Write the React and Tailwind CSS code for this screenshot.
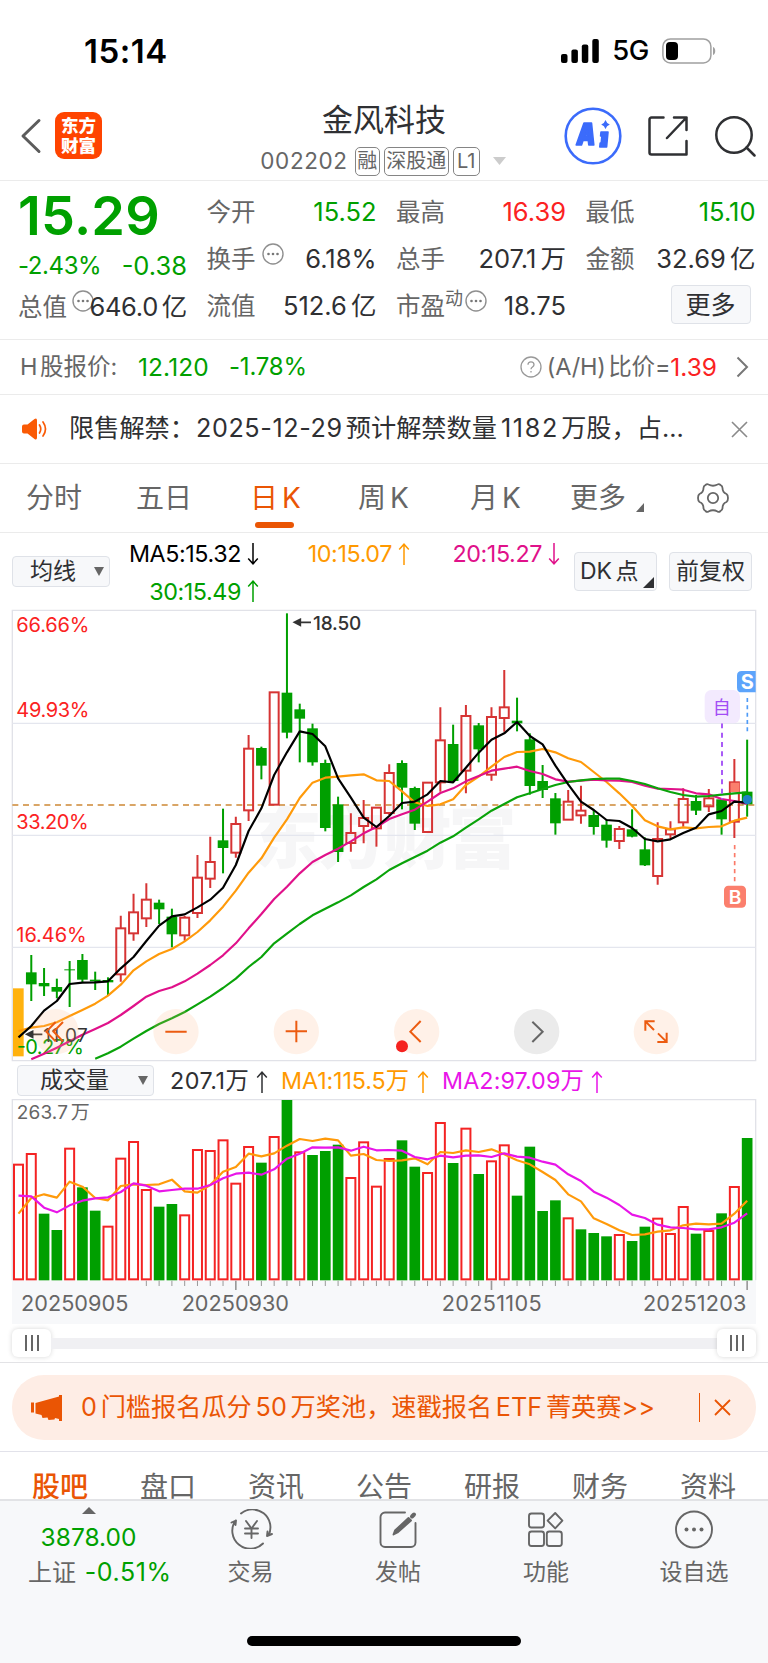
// Stock detail page: quote header, daily K-line chart, volume chart and bottom bar
import React from 'react';

// Chart units are a third of a pixel; one candle every 38.35 units
const STEP = 38.35;
const FIRST = 55.5;
const xAt = (i) => FIRST + i * STEP;

// [direction, high, body top, body bottom, low]
const candles = [
  ['o', 1165, 1165, 1366, 1370],
  ['g', 1065, 1117, 1153, 1203],
  ['g', 1104, 1149, 1159, 1188],
  ['g', 1136, 1161, 1175, 1195],
  ['g', 1083, 1108, 1111, 1221],
  ['g', 1062, 1080, 1139, 1146],
  ['g', 1115, 1139, 1144, 1170],
  ['g', 1132, 1140, 1147, 1187],
  ['r', 947, 984, 1124, 1145],
  ['r', 881, 936, 1001, 1022],
  ['r', 850, 898, 956, 981],
  ['g', 899, 908, 928, 972],
  ['g', 926, 950, 1003, 1042],
  ['r', 948, 952, 1007, 1022],
  ['r', 765, 832, 940, 954],
  ['r', 710, 785, 837, 864],
  ['g', 626, 721, 744, 820],
  ['r', 650, 671, 759, 773],
  ['r', 405, 445, 632, 663],
  ['g', 440, 444, 497, 538],
  ['r', 276, 276, 615, 615],
  ['g', 40, 278, 398, 415],
  ['g', 311, 328, 356, 487],
  ['g', 371, 385, 487, 497],
  ['g', 479, 489, 684, 694],
  ['g', 590, 613, 756, 786],
  ['r', 640, 698, 730, 755],
  ['r', 600, 653, 679, 730],
  ['r', 622, 622, 686, 740],
  ['r', 493, 518, 640, 645],
  ['g', 481, 489, 563, 628],
  ['g', 560, 564, 671, 690],
  ['r', 547, 547, 697, 697],
  ['r', 322, 420, 548, 575],
  ['g', 374, 432, 543, 545],
  ['r', 315, 347, 513, 580],
  ['g', 369, 376, 448, 487],
  ['r', 322, 350, 525, 542],
  ['r', 210, 321, 355, 395],
  ['g', 293, 362, 370, 394],
  ['g', 400, 418, 558, 584],
  ['g', 495, 543, 570, 594],
  ['g', 579, 595, 670, 704],
  ['r', 570, 604, 660, 660],
  ['r', 557, 631, 647, 671],
  ['g', 629, 645, 681, 704],
  ['g', 658, 674, 722, 743],
  ['r', 678, 686, 724, 747],
  ['g', 628, 688, 710, 712],
  ['g', 712, 748, 796, 798],
  ['r', 667, 716, 829, 854],
  ['r', 664, 687, 704, 718],
  ['r', 565, 596, 668, 680],
  ['g', 585, 603, 632, 645],
  ['r', 567, 594, 620, 636],
  ['g', 598, 598, 658, 704],
  ['r', 477, 546, 666, 714],
  ['g', 419, 575, 613, 650],
];

const ma5 = [1312, 1278, 1232, 1203, 1152, 1148, 1147, 1144, 1105, 1071, 1023, 977, 949, 943, 922, 899, 863, 795, 693, 625, 525, 457, 394, 402, 439, 535, 593, 653, 681, 648, 609, 605, 583, 543, 547, 503, 458, 419, 400, 366, 408, 433, 497, 553, 605, 630, 660, 663, 684, 717, 724, 718, 699, 683, 643, 633, 605, 608];
const ma10 = [1293, 1283, 1278, 1267, 1248, 1230, 1211, 1187, 1154, 1111, 1084, 1062, 1047, 1024, 996, 961, 920, 872, 818, 775, 713, 658, 594, 548, 533, 530, 526, 523, 541, 543, 574, 607, 618, 613, 598, 555, 530, 500, 471, 456, 455, 447, 457, 475, 486, 516, 546, 580, 617, 661, 679, 688, 682, 685, 681, 679, 662, 653];
const ma20 = [null, 1378, 1361, 1343, 1324, 1304, 1287, 1269, 1245, 1218, 1190, 1173, 1162, 1144, 1121, 1095, 1066, 1030, 985, 942, 897, 860, 820, 786, 765, 746, 724, 700, 681, 657, 643, 629, 605, 579, 565, 544, 528, 512, 506, 500, 513, 522, 538, 545, 542, 539, 541, 542, 546, 557, 566, 567, 569, 580, 583, 597, 603, 612];
const ma30 = [null, null, null, null, null, null, 1376, 1360, 1340, 1316, 1293, 1272, 1255, 1236, 1213, 1190, 1164, 1136, 1101, 1071, 1030, 1001, 972, 946, 926, 907, 886, 861, 838, 810, 790, 771, 752, 728, 709, 683, 658, 632, 612, 592, 580, 567, 555, 546, 541, 537, 536, 536, 543, 552, 565, 576, 585, 590, 588, 584, 580, 577];

// [direction, bar top]
const volumes = [
  ['r', 313], ['r', 281], ['g', 461], ['g', 510], ['r', 265], ['g', 382], ['g', 452], ['r', 499],
  ['r', 295], ['r', 245], ['r', 389], ['g', 440], ['g', 432], ['r', 465], ['r', 269], ['r', 272],
  ['r', 240], ['r', 370], ['r', 260], ['g', 308], ['r', 230], ['g', 120], ['r', 276], ['g', 285],
  ['g', 273], ['g', 254], ['r', 353], ['r', 246], ['r', 379], ['r', 296], ['g', 241], ['g', 320],
  ['r', 338], ['r', 188], ['g', 309], ['r', 205], ['g', 342], ['r', 303], ['r', 255], ['g', 407],
  ['g', 260], ['g', 453], ['g', 421], ['r', 474], ['g', 508], ['g', 519], ['g', 529], ['r', 524],
  ['g', 543], ['g', 500], ['r', 475], ['r', 521], ['r', 440], ['g', 521], ['r', 512], ['g', 460],
  ['r', 380], ['g', 234],
];

const volMa1 = [461, 414, 403, 413, 365, 380, 414, 421, 378, 373, 375, 373, 359, 394, 398, 375, 335, 321, 281, 289, 280, 257, 237, 243, 236, 241, 287, 282, 300, 303, 301, 295, 313, 276, 279, 271, 276, 268, 283, 301, 313, 336, 360, 403, 424, 475, 492, 511, 525, 523, 515, 511, 496, 491, 493, 491, 461, 422];
const volMa2 = [407, 409, 443, 457, 436, 422, 415, 412, 396, 370, 377, 394, 390, 386, 386, 375, 355, 341, 338, 344, 328, 296, 281, 262, 263, 262, 272, 260, 271, 270, 272, 291, 298, 287, 292, 287, 286, 291, 280, 290, 293, 305, 314, 343, 363, 395, 413, 435, 464, 474, 494, 502, 504, 508, 508, 502, 488, 460];

const toPoints = (values) =>
  values
    .map((y, i) => (y === null ? null : `${xAt(i)},${y}`))
    .filter(Boolean)
    .join(' ');

const Line = ({ values, color }) => (
  <polyline points={toPoints(values)} fill="none" stroke={color} strokeWidth="6.5" strokeLinejoin="round" />
);

const Arrow = ({ down }) => (
  <svg viewBox="0 0 12 22" className={`w-3 h-[22px] ${down ? 'rotate-180' : ''}`} fill="none" stroke="currentColor" strokeWidth="1.5">
    <path d="M6 22V1.2M1.2 6.4L6 1.2l4.8 5.2" />
  </svg>
);

const Dots = () => (
  <svg viewBox="0 0 22 22" className="w-[22px] h-[22px] shrink-0" fill="none" stroke="#8f8f8f" strokeWidth="1.4">
    <circle cx="11" cy="11" r="10" />
    <g fill="#777" stroke="none">
      <circle cx="6.5" cy="11" r="1.3" />
      <circle cx="11" cy="11" r="1.3" />
      <circle cx="15.5" cy="11" r="1.3" />
    </g>
  </svg>
);

const StatusBar = () => (
  <div className="h-[101px] pl-[84px] pr-[52px] flex items-center justify-between text-black">
    <span className="text-[33px] font-semibold tracking-[0.5px] leading-none pt-[2px]">15:14</span>
    <div className="flex items-center pt-[1px]">
      <svg viewBox="0 0 38 24" className="w-[38px] h-6">
        <rect x="0" y="15" width="6.5" height="9" rx="2" />
        <rect x="10.4" y="10.5" width="6.5" height="13.5" rx="2" />
        <rect x="20.8" y="5.5" width="6.5" height="18.5" rx="2" />
        <rect x="31.3" y="0" width="6.5" height="24" rx="2" />
      </svg>
      <span className="ml-[13px] text-[27.5px] font-medium tracking-[-0.4px] leading-none">5G</span>
      <svg viewBox="0 0 54 26" className="ml-[13px] w-[54px] h-[26px]">
        <rect x="0.9" y="0.9" width="48" height="24" rx="7.5" fill="none" stroke="#a0a0a0" strokeWidth="1.5" />
        <rect x="4" y="4" width="12" height="18" rx="4" />
        <path d="M51 9c3 1 3 7 0 8z" fill="#a0a0a0" />
      </svg>
    </div>
  </div>
);

const Header = () => (
  <header className="h-20 border-b border-[#ebebeb] flex items-start justify-between">
    <div className="w-[240px] flex items-center pl-5 pt-[11px]">
      <svg viewBox="0 0 22 36" className="w-[22px] h-9" fill="none" stroke="#5c5c5c" strokeWidth="3" strokeLinecap="round" strokeLinejoin="round">
        <path d="M19 2.5L3 18l16 15.5" />
      </svg>
      <div className="ml-[13px] w-[47px] h-[47px] rounded-[9px] bg-[#ff4400] text-white text-[17.5px] font-black leading-[19.5px] flex flex-col items-center justify-center">
        <span>东方</span>
        <span>财富</span>
      </div>
    </div>
    <div className="flex flex-col items-center text-[#2f3033]">
      <h1 className="-mt-px text-[31px] leading-[40px]">金风科技</h1>
      <div className="flex items-center text-[#666] h-[42px] -translate-x-[1px]">
        <span className="text-[22.5px] tracking-[0.6px] mr-[7px]">002202</span>
        <span className="h-[29px] w-[25px] rounded-[5px] border border-[#858585] text-[20px] leading-[27px] text-center mr-[4px]">融</span>
        <span className="h-[29px] w-[65px] rounded-[5px] border border-[#858585] text-[20px] leading-[27px] text-center mr-[4px]">深股通</span>
        <span className="h-[29px] w-[27px] rounded-[5px] border border-[#858585] text-[20px] leading-[27px] text-center mr-[13px]">L1</span>
        <svg viewBox="0 0 13 8" className="w-[13px] h-2" fill="#ccc"><path d="M0 0h13L6.5 8z" /></svg>
      </div>
    </div>
    <div className="w-[240px] flex items-center justify-end pr-[12px] pt-[6px]">
      <svg viewBox="0 0 58 58" className="w-[58px] h-[58px]" fill="#3b6bfb" stroke="#3b6bfb" strokeLinejoin="round">
        <circle cx="29" cy="29" r="27.3" fill="none" strokeWidth="2.6" />
        <path fillRule="evenodd" strokeWidth="1.6" d="M20 16h7.5l2.3 22h-5l-.5-4.500h-5.300L17.500 38h-5.300zM23.300 23.500l-1.800 5.500h2.300z" />
        <path strokeWidth="1.6" d="M37 25h7l-1.400 15h-6.800l.4-4h1l.7-7h-1.300z" />
        <path stroke="none" d="M41.500 13q1 3.300 4.300 4.500-3.300 1.200-4.300 4.500-1-3.300-4.300-4.500 3.300-1.200 4.300-4.500z" />
      </svg>
      <svg viewBox="0 0 40 40" className="ml-[26px] w-10 h-10" fill="none" stroke="#2f3033" strokeWidth="2.5" strokeLinecap="round" strokeLinejoin="round">
        <path d="M15.5 1.5H3.500a2 2 0 00-2 2v33a2 2 0 002 2h35V25M38.500 14V1.500H26M38.500 1.500L19 22" />
      </svg>
      <svg viewBox="0 0 41 41" className="ml-[27px] w-[41px] h-[41px]" fill="none" stroke="#2f3033" strokeWidth="2.5" strokeLinecap="round">
        <circle cx="19" cy="19" r="17.7" />
        <path d="M31.5 31.5l8 8" />
      </svg>
    </div>
  </header>
);

const Cell = ({ label, children, value, color = 'text-[#2f3033]' }) => (
  <div className="flex items-center h-[47px]">
    <span className="text-[24.5px] text-[#666]">{label}</span>
    {children}
    <span className={`ml-auto text-[25.5px] [word-spacing:-3px] whitespace-nowrap ${color}`}>{value}</span>
  </div>
);

const Quote = () => (
  <section className="h-[159px] pt-[8px] pl-[18px] border-b border-[#ebebeb] grid grid-cols-[169px_170px_170px_170px] gap-x-[19.5px] items-start">
    <div className="text-[#00a000]">
      <div className="text-[54px] font-semibold leading-[54px] tracking-[0.2px]">15.29</div>
      <div className="flex justify-between items-center h-[44px] mt-[1px]">
        <span className="text-[24px] tracking-[-0.4px]">-2.43%</span>
        <span className="text-[25.5px]">-0.38</span>
      </div>
      <div className="flex items-center h-[38px] whitespace-nowrap">
        <span className="text-[24.5px] text-[#666] shrink-0">总值</span>
        <span className="ml-[5px] -mr-[12px] -mt-3 shrink-0"><Dots /></span>
        <span className="ml-auto text-[25.5px] tracking-[-0.3px] [word-spacing:-3px] text-[#2f3033]">646.0 亿</span>
      </div>
    </div>
    <div>
      <Cell label="今开" value="15.52" color="text-[#00a000]" />
      <Cell label="换手" value="6.18%">
        <span className="ml-[6px] -mt-3"><Dots /></span>
      </Cell>
      <Cell label="流值" value="512.6 亿" />
    </div>
    <div>
      <Cell label="最高" value="16.39" color="text-[#fb2222]" />
      <Cell label="总手" value="207.1 万" />
      <Cell label="市盈" value="18.75">
        <span className="text-[18px] text-[#666] -mt-4">动</span>
        <span className="ml-[2px] -mt-3"><Dots /></span>
      </Cell>
    </div>
    <div>
      <Cell label="最低" value="15.10" color="text-[#00a000]" />
      <Cell label="金额" value="32.69 亿" />
      <button className="block ml-auto mr-[5px] mt-[2px] w-20 h-[39px] rounded-[4px] border border-[#dfe2e8] bg-[#f7f8fa] text-[25px] leading-[36px] text-[#2f3033]">更多</button>
    </div>
  </section>
);

const HShare = () => (
  <section className="h-[55px] border-b border-[#ebebeb] pl-5 pr-[19px] flex items-center text-[23.5px] text-[#666] whitespace-nowrap [word-spacing:-4px]">
    <span className="w-[118px]">H 股报价:</span>
    <span className="w-[91px] text-[24.5px] text-[#00a000] tracking-[0.1px]">12.120</span>
    <span className="text-[24px] text-[#00a000] tracking-[-0.2px]">-1.78%</span>
    <svg viewBox="0 0 22 22" className="ml-auto mr-[5px] w-[22px] h-[22px]" fill="none" stroke="#999" strokeWidth="1.3">
      <circle cx="11" cy="11" r="10" />
      <path d="M8 8.8c0-4 6-4 6 0 0 2.2-3 2.2-3 4.400M11 15v1.600" />
    </svg>
    <span className="tracking-[-0.15px]">(A/H) 比价=</span>
    <span className="text-[24.5px] text-[#fb2222]">1.39</span>
    <svg viewBox="0 0 13 22" className="ml-[19px] w-[13px] h-[22px]" fill="none" stroke="#777" strokeWidth="2">
      <path d="M1.5 1.5L11 11l-9.5 9.5" />
    </svg>
  </section>
);

const Notice = () => (
  <section className="h-[69px] border-b border-[#ebebeb] pl-[22px] pr-[20px] flex items-center">
    <svg viewBox="0 0 26 22" className="w-[26px] h-[22px]" fill="#fa5a05">
      <path d="M2 6.500h3.500L12.500 1q2.500-1.500 2.500 1.500v17q0 3-2.500 1.500L5.500 15.500H2q-2 0-2-2v-5q0-2 2-2z" />
      <path d="M17.500 7q2.500 4 0 8M21 4q5 7 0 14" fill="none" stroke="#fa5a05" strokeWidth="1.7" strokeLinecap="round" />
    </svg>
    <span className="ml-[21px] text-[25.2px] text-[#2f3033] whitespace-nowrap">
      限售解禁：<span className="tracking-[0.6px] ml-px mr-[3px]">2025-12-29</span>预计解禁数量<span className="tracking-[1.7px] ml-[4px] mr-[2px]">1182</span>万股，占...
    </span>
    <svg viewBox="0 0 17 17" className="ml-auto w-[17px] h-[17px]" fill="none" stroke="#8a8a8a" strokeWidth="1.6">
      <path d="M1 1l15 15M16 1L1 16" />
    </svg>
  </section>
);

const Periods = () => (
  <nav className="h-[69px] border-b border-[#ebebeb] pl-[26px] grid grid-cols-[110px_114px_108px_112px_100px_127px_auto] items-center text-[28px] text-[#666] whitespace-nowrap [word-spacing:-4px]">
    <span>分时</span>
    <span>五日</span>
    <span className="relative text-[#ea5504]">
      日 K
      <i className="absolute left-[5px] -bottom-[9px] w-[39px] h-[6px] rounded-full bg-[#ea5504]" />
    </span>
    <span>周 K</span>
    <span>月 K</span>
    <span className="flex items-end">
      更多
      <svg viewBox="0 0 8 9" className="ml-[10px] mb-[7px] w-2 h-[9px]" fill="#666"><path d="M8 0v9H0z" /></svg>
    </span>
    <svg viewBox="0 0 32 32" className="w-8 h-8" fill="none" stroke="#666" strokeWidth="1.8" strokeLinejoin="round">
      <path d="M11.500 2.500Q16 5 20.500 2.500q1.500-1 3 .5 2 1 2 3 0 4.500 4 6 1.500 1 1.500 4t-1.500 4q-4 1.500-4 6 0 2-2 3-1.500 1.500-3 .5Q16 27 11.500 29.500q-1.500 1-3-.5-2-1-2-3 0-4.500-4-6Q1 19 1 16t1.500-4q4-1.500 4-6 0-2 2-3 1.500-1.500 3-.5z" />
      <circle cx="16" cy="16" r="5.2" />
    </svg>
  </nav>
);

const MaLegend = () => (
  <div className="h-[76px] pl-3 pr-4 flex items-center">
    <button className="w-[98px] h-[31px] rounded-[4px] border border-[#dfe2e8] bg-[#f7f8fa] pl-[17px] pr-[5px] flex items-center justify-between text-[23px] leading-none text-[#2f3033]">
      均线
      <svg viewBox="0 0 10 9" className="w-[10px] h-[9px]" fill="#666"><path d="M0 0h10L5 9z" /></svg>
    </button>
    <div className="pt-[3px] grid grid-cols-[149px_151px_150px] text-[23.3px] leading-[37.5px] tracking-[-0.4px]">
      <span className="flex items-center justify-end gap-[6px] text-black">MA5:15.32<Arrow down /></span>
      <span className="flex items-center justify-end gap-[6px] text-[#ff9900]">10:15.07<Arrow /></span>
      <span className="flex items-center justify-end gap-[6px] text-[#e0118a]">20:15.27<Arrow down /></span>
      <span className="flex items-center justify-end gap-[6px] text-[#00a000]">30:15.49<Arrow /></span>
    </div>
    <button className="ml-auto w-[83px] h-[39px] rounded-[4px] border border-[#dfe2e8] bg-[#f7f8fa] pl-[5px] flex items-center text-[23px] leading-none text-[#2f3033] whitespace-nowrap [word-spacing:-3px]">
      DK 点
      <svg viewBox="0 0 11 11" className="ml-[4px] mt-[22px] w-[11px] h-[11px] shrink-0" fill="#2f3033"><path d="M11 0v11H0z" /></svg>
    </button>
    <button className="ml-3 w-[83px] h-[39px] rounded-[4px] border border-[#dfe2e8] bg-[#f7f8fa] text-[23px] leading-none text-[#2f3033] whitespace-nowrap">前复权</button>
  </div>
);

const KChart = () => (
  <svg viewBox="0 27 2304 1359" className="block w-[768px] h-[453px]">
    <text x="1155" y="790" textAnchor="middle" fontSize="205" fontWeight="900" textLength="790" fill="#f6f6f7">东方财富</text>
    <path d="M37 31H2267V1382H37z" fill="none" stroke="#e1e2e8" strokeWidth="4" />
    <path d="M37 370H2267M37 706H2267M37 1042H2267" stroke="#e4e6ee" strokeWidth="4" />
    <path d="M37 615H2267" stroke="#d9a566" strokeWidth="6" strokeDasharray="18 14" />

    {candles.map(([dir, high, top, bottom, low], i) => {
      const x = xAt(i);
      if (dir === 'o') {
        return <rect key={i} x="39" y={top} width="32" height={bottom - top + 3} fill="#ffb20f" />;
      }
      if (dir === 'r') {
        return (
          <g key={i} stroke="#d63434" strokeWidth="6" fill="none">
            <path d={`M${x} ${high}V${top}M${x} ${bottom}V${low}`} />
            <rect x={x - 13.5} y={top + 1} width="27" height={bottom - top - 2} />
          </g>
        );
      }
      return (
        <g key={i} fill="#009f00">
          <rect x={x - 3} y={high} width="6" height={low - high} />
          <rect x={x - 16} y={top} width="32" height={bottom - top} />
        </g>
      );
    })}

    <g fontSize="60" fill="#fb2222">
      <text x="49" y="95" textLength="219">66.66%</text>
      <text x="49" y="351" textLength="219">49.93%</text>
      <text x="49" y="687" textLength="217">33.20%</text>
      <text x="49" y="1026" textLength="211">16.46%</text>
      <text x="50" y="1361" textLength="202" fill="#00a000">-0.27%</text>
    </g>

    <rect x="2192" y="548" width="26" height="28" fill="#fb7f6d" />
    <Line values={ma10} color="#ff9a0a" />
    <Line values={ma20} color="#e0118a" />
    <Line values={ma30} color="#0aa30a" />
    <Line values={ma5} color="#000" />
    <circle cx="2242" cy="599" r="14" fill="#1f82c6" />

    {/* trade marks */}
    <path d="M2166 370V598" stroke="#a95bf7" strokeWidth="6" strokeDasharray="15 13" />
    <rect x="2114" y="270" width="106" height="100" rx="20" fill="#f3eafe" />
    <text x="2165" y="343" textAnchor="middle" fontSize="54" fill="#a24df5">自</text>
    <path d="M2242 294V404" stroke="#4f9bf7" strokeWidth="5" strokeDasharray="12 10" />
    <path d="M2267 213h-42q-14 0-14 14v36q0 14 14 14h42z" fill="#5ca4fb" />
    <text x="2242" y="267" textAnchor="middle" fontSize="60" fontWeight="700" fill="#fff">S</text>
    <path d="M2204 735V850" stroke="#fb7a68" strokeWidth="5" strokeDasharray="13 11" />
    <rect x="2172" y="857" width="66" height="66" rx="13" fill="#fb7f6d" />
    <text x="2205" y="911" textAnchor="middle" fontSize="58" fontWeight="600" fill="#fff">B</text>

    {/* high and low labels */}
    <path d="M885 67H933M901 58l-18 9 18 9z" stroke="#333" strokeWidth="5" fill="#333" />
    <text x="939" y="89" fontSize="57" fontWeight="500" textLength="145" fill="#333">18.50</text>
    <path d="M80 1303H127M98 1294l-18 9 18 9z" stroke="#333" strokeWidth="5" fill="#333" />
    <text x="130" y="1325" fontSize="57" textLength="133" fill="#333">11.07</text>

    {/* zoom and pan buttons */}
    <g fill="#ffb07f" fillOpacity="0.18">
      <circle cx="168" cy="1295" r="68" />
      <circle cx="528" cy="1295" r="68" />
      <circle cx="889" cy="1295" r="68" />
      <circle cx="1250" cy="1295" r="68" />
      <circle cx="1969" cy="1295" r="68" />
    </g>
    <circle cx="1610" cy="1295" r="68" fill="#ebebeb" />
    <g fill="none" stroke="#ec5b10" strokeWidth="6">
      <path d="M167 1266l-28 29 28 29M189 1266l-28 29 28 29" />
      <path d="M496 1295h64M857 1294h64M889 1262v65" />
      <path d="M1262 1263l-31 32 31 31" />
      <path d="M1964 1264h-28v28M1937 1265l25 25M2000 1298v28h-28M1999 1325l-25-25" />
    </g>
    <path d="M1597 1265l31 30-31 31" fill="none" stroke="#666" strokeWidth="6" />
    <circle cx="1206" cy="1339" r="18" fill="#f5221f" />
  </svg>
);

const VolumeLegend = () => (
  <div className="h-[37px] pl-[17px] flex items-center text-[23.3px] whitespace-nowrap">
    <button className="w-[137px] h-[31px] rounded-[4px] border border-[#dfe2e8] bg-[#f7f8fa] pl-[22px] pr-[5px] flex items-center justify-between text-[23px] leading-none text-[#2f3033]">
      成交量
      <svg viewBox="0 0 10 9" className="w-[10px] h-[9px]" fill="#666"><path d="M0 0h10L5 9z" /></svg>
    </button>
    <span className="pt-[2px] ml-[16px] w-[111px] flex items-center gap-[7px] tracking-[0.5px] text-[#2f3033]">207.1万<Arrow /></span>
    <span className="pt-[2px] w-[161px] flex items-center gap-[8px] tracking-[-0.1px] text-[#ff9900]">MA1:115.5万<Arrow /></span>
    <span className="pt-[2px] flex items-center gap-[7px] tracking-[0.1px] text-[#e815e8]">MA2:97.09万<Arrow /></span>
  </div>
);

const VolumeChart = () => (
  <svg viewBox="0 117 2304 675" className="block w-[768px] h-[225px]">
    <rect x="36" y="661" width="2232" height="131" fill="#f7f8fa" />
    <path d="M37 661V119H2267V661" fill="none" stroke="#e1e2e8" strokeWidth="4" />
    <text x="50" y="178" fontSize="57" textLength="219" wordSpacing="-9" fill="#666">263.7 万</text>
    {volumes.map(([dir, top], i) =>
      dir === 'r' ? (
        <rect key={i} x={xAt(i) - 13.5} y={top + 1} width="27" height={657 - top} fill="none" stroke="#f42323" strokeWidth="6" />
      ) : (
        <rect key={i} x={xAt(i) - 16} y={top} width="32" height={661 - top} fill="#009f00" />
      )
    )}
    {volumes.map((_, i) =>
      i < 10 ? null : (
        <path key={i} d={`M${xAt(i)} 662v${i % 20 === 17 ? 28 : 16}`} stroke="#999" strokeWidth={i % 20 === 17 ? 5 : 3} />
      )
    )}
    <Line values={volMa1} color="#ff9a0a" />
    <Line values={volMa2} color="#e815e8" />
    <g fontSize="65" fill="#666">
      <text x="63" y="754" textLength="322">20250905</text>
      <text x="545" y="754" textLength="322">20250930</text>
      <text x="1325" y="754" textLength="300">20251105</text>
      <text x="1929" y="754" textLength="310">20251203</text>
    </g>
  </svg>
);

const Grip = () => (
  <span className="w-[39px] h-[28px] rounded-[6px] bg-white shadow-[0_0_5px_rgba(0,0,0,0.16)] flex items-center justify-center gap-1">
    <i className="w-[2px] h-4 bg-[#666]" />
    <i className="w-[2px] h-4 bg-[#666]" />
    <i className="w-[2px] h-4 bg-[#666]" />
  </span>
);

const RangeSlider = () => (
  <div className="h-[39px] px-3 border-b border-[#e3e3e6] flex items-center">
    <Grip />
    <span className="flex-1 h-[11px] bg-[#f0f0f3]" />
    <Grip />
  </div>
);

const Banner = () => (
  <div className="h-[89px] px-3 pt-3 border-b border-[#e2e2ea]">
    <div className="h-[65px] rounded-[32px] bg-[#feede5] pl-[19px] pr-[25px] flex items-center text-[#ea5504]">
      <svg viewBox="0 0 31 26" className="w-[31px] h-[26px]" fill="#ea5504">
        <path d="M0 7.500h3v10H0zM4.500 8L28 1.500V0h3v26h-3v-2l-4-1-.5 1.500-6 .5-1-2.500-5 .5-1-3L4.500 18.500z" />
      </svg>
      <span className="ml-[19px] text-[25.2px] [word-spacing:-3.3px] whitespace-nowrap">0 门槛报名瓜分 50 万奖池，速戳报名 ETF 菁英赛&gt;&gt;</span>
      <i className="ml-auto w-[1.5px] h-[29px] bg-[#ea5504]" />
      <svg viewBox="0 0 17 17" className="ml-[14px] w-[17px] h-[17px]" fill="none" stroke="#ea5504" strokeWidth="1.8">
        <path d="M1 1l15 15M16 1L1 16" />
      </svg>
    </div>
  </div>
);

const sections = ['股吧', '盘口', '资讯', '公告', '研报', '财务', '资料'];

const SectionTabs = () => (
  <nav className="h-[47px] pl-[6px] pr-[6px] grid grid-cols-7 overflow-hidden text-[28px] leading-[70px] text-center text-[#666]">
    {sections.map((name, i) => (
      <span key={name} className={i === 0 ? 'text-[#ea5504] font-medium' : ''}>{name}</span>
    ))}
  </nav>
);

const NavItem = ({ label, children }) => (
  <div className="flex flex-col items-center pt-[8px]">
    <svg viewBox="0 0 44 40" className="w-11 h-10" fill="none" stroke="#666" strokeWidth="1.9" strokeLinecap="round" strokeLinejoin="round">
      {children}
    </svg>
    <span className="mt-[5px] text-[23px] leading-[36px]">{label}</span>
  </div>
);

const BottomBar = () => (
  <footer className="h-[165px] border-t-2 border-[#e2e3e6] bg-[#f7f8fa] text-[#666]">
    <div className="h-[135px] grid grid-cols-[177px_147px_148px_148px_148px] items-start">
      <div className="flex flex-col items-center pt-[6px]">
        <svg viewBox="0 0 14 7" className="w-[14px] h-[7px]" fill="#666"><path d="M7 0l7 7H0z" /></svg>
        <span className="mt-[6px] text-[24.5px] leading-[35px] text-[#00a000]">3878.00</span>
        <span className="w-full pl-[28px] text-[24px] leading-[35px] whitespace-nowrap">
          上证 <span className="ml-[2px] text-[25px] tracking-[0.6px] text-[#00a000]">-0.51%</span>
        </span>
      </div>
      <NavItem label="交易">
        <path d="M12 4.500A18 18 0 0139.500 26.500M34 34.500A18 18 0 016.500 11.500M2.500 13.500l4.500-2-.5 4.500M43 25l-5 2 .5-4.500" />
        <path d="M17 12l5.500 7.500L28 12M22.500 19.500V29M16 19.500h13M16 24.500h13" />
      </NavItem>
      <NavItem label="发帖">
        <path d="M29 3.500H9a4.500 4.500 0 00-4.500 4.500v25.500A4.500 4.500 0 009 38h26a4.500 4.500 0 004.500-4.500V14" />
        <path d="M17.500 25.500l1.500-4L32.500 9l2.500 2.500-13.500 12z" fill="#666" />
        <path d="M36 7.500l2-2" strokeWidth="4" />
      </NavItem>
      <NavItem label="功能">
        <rect x="5" y="4.500" width="15" height="14" rx="2.500" />
        <rect x="5" y="22.500" width="15" height="14.500" rx="2.500" />
        <rect x="22.800" y="22.500" width="15" height="14.500" rx="2.500" />
        <path d="M31.200 4l7.200 7.600-7.200 7.800-7.600-7.800z" />
      </NavItem>
      <NavItem label="设自选">
        <circle cx="22" cy="20.500" r="18" />
        <g fill="#666" stroke="none">
          <circle cx="14.500" cy="20.500" r="2" />
          <circle cx="22" cy="20.500" r="2" />
          <circle cx="29.500" cy="20.500" r="2" />
        </g>
      </NavItem>
    </div>
    <div className="mx-auto w-[274px] h-[10px] rounded-full bg-black" />
  </footer>
);

const App = () => (
  <div className="w-[768px] h-[1663px] overflow-hidden bg-white font-['Inter','Noto_Sans_CJK_SC',sans-serif] font-normal">
    <StatusBar />
    <Header />
    <Quote />
    <HShare />
    <Notice />
    <Periods />
    <MaLegend />
    <KChart />
    <VolumeLegend />
    <VolumeChart />
    <RangeSlider />
    <Banner />
    <SectionTabs />
    <BottomBar />
  </div>
);

export default App;
